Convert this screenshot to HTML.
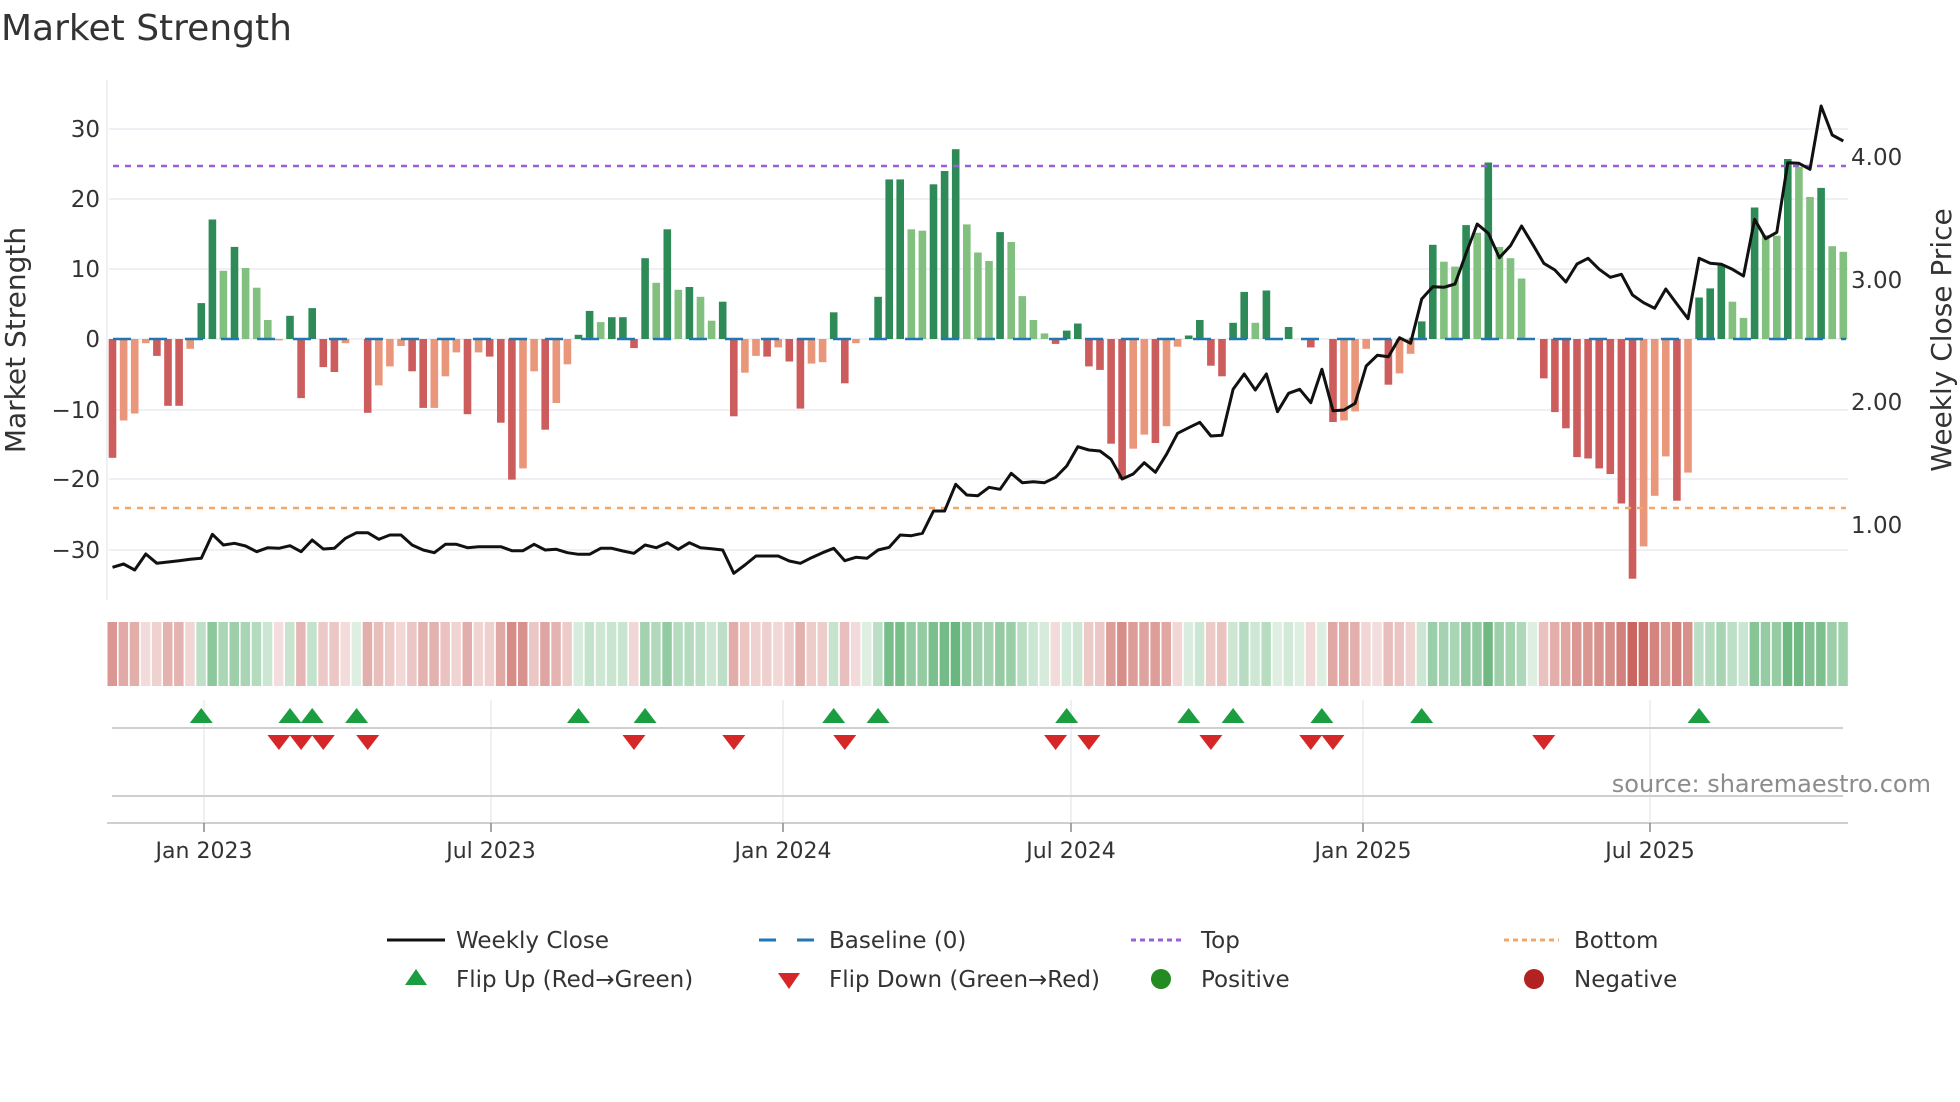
<!DOCTYPE html>
<html><head><meta charset="utf-8">
<style>
html,body{margin:0;padding:0;background:#fff;}
svg{display:block;}
text{font-family:"DejaVu Sans","Liberation Sans",sans-serif;fill:#333;}
</style></head>
<body>
<svg id="s" width="1960" height="1102" viewBox="0 0 1960 1102" xmlns="http://www.w3.org/2000/svg">
<text x="1" y="40" font-size="36">Market Strength</text>
<!-- gridlines -->
<g stroke="#eef0f5" stroke-width="2">
<line x1="109" x2="1848" y1="129" y2="129"/><line x1="109" x2="1848" y1="199" y2="199"/>
<line x1="109" x2="1848" y1="269" y2="269"/><line x1="109" x2="1848" y1="339" y2="339"/>
<line x1="109" x2="1848" y1="410" y2="410"/><line x1="109" x2="1848" y1="479" y2="479"/>
<line x1="109" x2="1848" y1="550" y2="550"/>
</g>
<line x1="107" x2="107" y1="80" y2="600" stroke="#eef0f5" stroke-width="2"/>
<g font-size="23" text-anchor="end">
<text x="100" y="137">30</text><text x="100" y="207">20</text><text x="100" y="277">10</text>
<text x="100" y="347">0</text><text x="100" y="418">−10</text><text x="100" y="487">−20</text>
<text x="100" y="558">−30</text>
</g>
<text transform="translate(25,340) rotate(-90)" font-size="28" text-anchor="middle">Market Strength</text>
<g font-size="23">
<text x="1851" y="165">4.00</text><text x="1851" y="288">3.00</text>
<text x="1851" y="410">2.00</text><text x="1851" y="533">1.00</text>
</g>
<text transform="translate(1951,340) rotate(-90)" font-size="28" text-anchor="middle">Weekly Close Price</text>
<g id="bars"></g>
<line x1="113" x2="1846" y1="339" y2="339" stroke="#1f77b4" stroke-width="2.5" stroke-dasharray="18 18"/>
<line x1="113" x2="1846" y1="166" y2="166" stroke="#9b5fd8" stroke-width="2.5" stroke-dasharray="6 6"/>
<line x1="113" x2="1846" y1="508" y2="508" stroke="#f0a868" stroke-width="2.5" stroke-dasharray="6 6"/>
<polyline id="price" fill="none" stroke="#111" stroke-width="3" stroke-linejoin="round"/>
<g id="strip"></g>
<!-- lower panels -->
<g stroke="#e8eaef" stroke-width="1.5">
<line x1="204" x2="204" y1="700" y2="770"/><line x1="491" x2="491" y1="700" y2="770"/>
<line x1="783" x2="783" y1="700" y2="770"/><line x1="1071" x2="1071" y1="700" y2="770"/>
<line x1="1363" x2="1363" y1="700" y2="770"/><line x1="1650" x2="1650" y1="700" y2="770"/>
<line x1="204" x2="204" y1="770" y2="823"/><line x1="491" x2="491" y1="770" y2="823"/>
<line x1="783" x2="783" y1="770" y2="823"/><line x1="1071" x2="1071" y1="770" y2="823"/>
<line x1="1363" x2="1363" y1="770" y2="823"/><line x1="1650" x2="1650" y1="770" y2="823"/>
</g>
<line x1="112" x2="1843" y1="728" y2="728" stroke="#cfcfd2" stroke-width="2"/>
<line x1="112" x2="1843" y1="796" y2="796" stroke="#cfcfd2" stroke-width="2"/>
<line x1="107" x2="1848" y1="823" y2="823" stroke="#cfcfd2" stroke-width="2"/>
<g stroke="#888" stroke-width="1.5">
<line x1="204" x2="204" y1="823" y2="832"/><line x1="491" x2="491" y1="823" y2="832"/>
<line x1="783" x2="783" y1="823" y2="832"/><line x1="1071" x2="1071" y1="823" y2="832"/>
<line x1="1363" x2="1363" y1="823" y2="832"/><line x1="1650" x2="1650" y1="823" y2="832"/>
</g>
<g id="tri"></g>
<g font-size="22" text-anchor="middle">
<text x="204" y="858">Jan 2023</text><text x="491" y="858">Jul 2023</text>
<text x="783" y="858">Jan 2024</text><text x="1071" y="858">Jul 2024</text>
<text x="1363" y="858">Jan 2025</text><text x="1650" y="858">Jul 2025</text>
</g>
<text x="1931" y="792" font-size="24" text-anchor="end" style="fill:#8c8c8c">source: sharemaestro.com</text>
<!-- legend -->
<line x1="387" x2="445" y1="940" y2="940" stroke="#111" stroke-width="3"/>
<line x1="759" x2="814" y1="940" y2="940" stroke="#1f77b4" stroke-width="3" stroke-dasharray="17 21"/>
<line x1="1131" x2="1185" y1="940" y2="940" stroke="#9b5fd8" stroke-width="3" stroke-dasharray="5 4"/>
<line x1="1504" x2="1559" y1="940" y2="940" stroke="#f0a868" stroke-width="3" stroke-dasharray="5 4"/>
<polygon points="416,969 427,985 405,985" fill="#1a9e3f"/>
<polygon points="778,973 800,973 789,989" fill="#d62728"/>
<circle cx="1161" cy="979" r="10" fill="#228b22"/>
<circle cx="1534" cy="979" r="10" fill="#b22222"/>
<g font-size="23">
<text x="456" y="948">Weekly Close</text><text x="829" y="948">Baseline (0)</text>
<text x="1201" y="948">Top</text><text x="1574" y="948">Bottom</text>
<text x="456" y="987">Flip Up (Red→Green)</text><text x="829" y="987">Flip Down (Green→Red)</text>
<text x="1201" y="987">Positive</text><text x="1574" y="987">Negative</text>
</g>
</svg>
<script>
(function(){
var NS="http://www.w3.org/2000/svg";
var v=[-16.9,-11.6,-10.6,-0.6,-2.4,-9.5,-9.5,-1.4,5.1,17,9.7,13.1,10.1,7.3,2.7,-0.2,3.3,-8.4,4.4,-4,-4.7,-0.6,0,-10.5,-6.6,-3.9,-1,-4.6,-9.8,-9.8,-5.3,-1.9,-10.7,-1.9,-2.5,-11.9,-20,-18.4,-4.6,-12.9,-9.1,
-3.6,0.6,4,2.4,3.1,3.1,-1.3,11.5,8,15.6,7,7.4,6,2.6,5.3,-11,-4.8,-2.4,-2.5,-1.2,-3.2,-9.9,-3.5,-3.3,3.8,-6.3,-0.6,0,6,22.7,22.7,15.6,15.4,22,23.9,27,16.3,12.3,11.1,15.2,13.8,
6.1,2.7,0.8,-0.7,1.2,2.2,-3.9,-4.4,-14.9,-19.9,-15.6,-13.6,-14.8,-12.4,-1.1,0.5,2.7,-3.8,-5.3,2.3,6.7,2.3,6.9,0,1.7,0,-1.2,0,-11.8,-11.6,-10.3,-1.4,-0.2,-6.5,-4.9,-2.1,2.5,13.4,
11,10.3,16.2,15.1,25.1,13.1,11.5,8.6,0,-5.6,-10.4,-12.7,-16.8,-17,-18.4,-19.2,-23.4,-34.1,-29.5,-22.3,-16.7,-23,-19,5.9,7.2,10.5,5.3,3,18.7,14.8,14.7,25.6,24.5,20.2,21.5,13.2,12.4];
var d="DLLLDDDLDDLDLLLLDDDDDLLDLLLDDLLLDLDDDLLDL"+"LDDLDDDDLDLDLLDDLLDLDDLLDDLLDDDLLDDDLLLDL"+"LLLDDDDDDDLLDLLDDDDDDLDLDLDLDLLLLDLLDD"+"LLDLDLLLLDDDDDDDDDLLLDLDDDLLDLLDLLDLL";
var p=[1462,1452,1470,1422,1450,1446,1442,1438,1435,1363,1395,1390,1398,1415,1403,1405,1397,1415,1380,1407,1405,1375,1358,1358,1378,1365,1365,1395,1410,1418,1393,1393,1403,1400,1400,1400,1412,1412,1393,1410,1408,
1418,1423,1423,1405,1405,1413,1420,1395,1403,1388,1408,1388,1403,1406,1410,1480,1455,1428,1428,1428,1443,1450,1433,1418,1405,1442,1432,1435,1410,1402,1365,1367,1360,1293,1293,1213,1245,1247,1222,1228,
1180,1208,1205,1208,1192,1158,1100,1110,1113,1138,1197,1182,1148,1177,1123,1060,1043,1027,1068,1066,928,882,930,882,995,940,928,968,868,992,990,970,858,826,830,773,790,657,620,
622,612,520,432,460,533,497,438,493,550,570,606,552,535,568,592,583,645,668,685,627,672,716,535,550,553,568,588,418,476,457,248,250,268,78,165,183];
var bars=document.getElementById("bars"),strip=document.getElementById("strip"),tri=document.getElementById("tri");
function el(n,a,par){var e=document.createElementNS(NS,n);for(var k in a)e.setAttribute(k,a[k]);par.appendChild(e);return e;}
function mix(c,t){return "rgb("+c.map(function(x){return Math.round(255+(x-255)*t);}).join(",")+")";}
var X0=112.5,P=11.095;
var pts=[];
for(var i=0;i<v.length;i++){
 var cx=X0+P*i, val=v[i], dark=d[i]==="D";
 if(Math.abs(val)>0.05){
  var y0=339,y1=339-val*7.03;
  var col=val>0?(dark?"#2e8b57":"#82c07f"):(dark?"#cd5c5c":"#e9967a");
  el("rect",{x:(cx-3.8).toFixed(1),y:Math.min(y0,y1).toFixed(1),width:7.6,height:Math.abs(y1-y0).toFixed(1),fill:col},bars);
 }
 var t=0.18+0.72*Math.min(1,Math.pow(Math.abs(val)/32,0.8));
 var sc=val>=0?mix([70,165,95],t):mix([195,85,78],t);
 el("rect",{x:(cx-5.0).toFixed(1),y:622,width:9.5,height:64,fill:sc},strip);
 pts.push(cx.toFixed(1)+","+(80+p[i]/3).toFixed(1));
}
document.getElementById("price").setAttribute("points",pts.join(" "));
var up=[8,16,18,22,42,48,65,69,86,97,101,109,118,143];
var dn=[15,17,19,23,47,56,66,85,88,99,108,110,129];
up.forEach(function(i){var x=X0+P*i;el("polygon",{points:x+",708 "+(x+11.5)+",723 "+(x-11.5)+",723",fill:"#1a9e3f"},tri);});
dn.forEach(function(i){var x=X0+P*i;el("polygon",{points:(x-11.5)+",735 "+(x+11.5)+",735 "+x+",750",fill:"#d62728"},tri);});
})();
</script>
</body></html>
